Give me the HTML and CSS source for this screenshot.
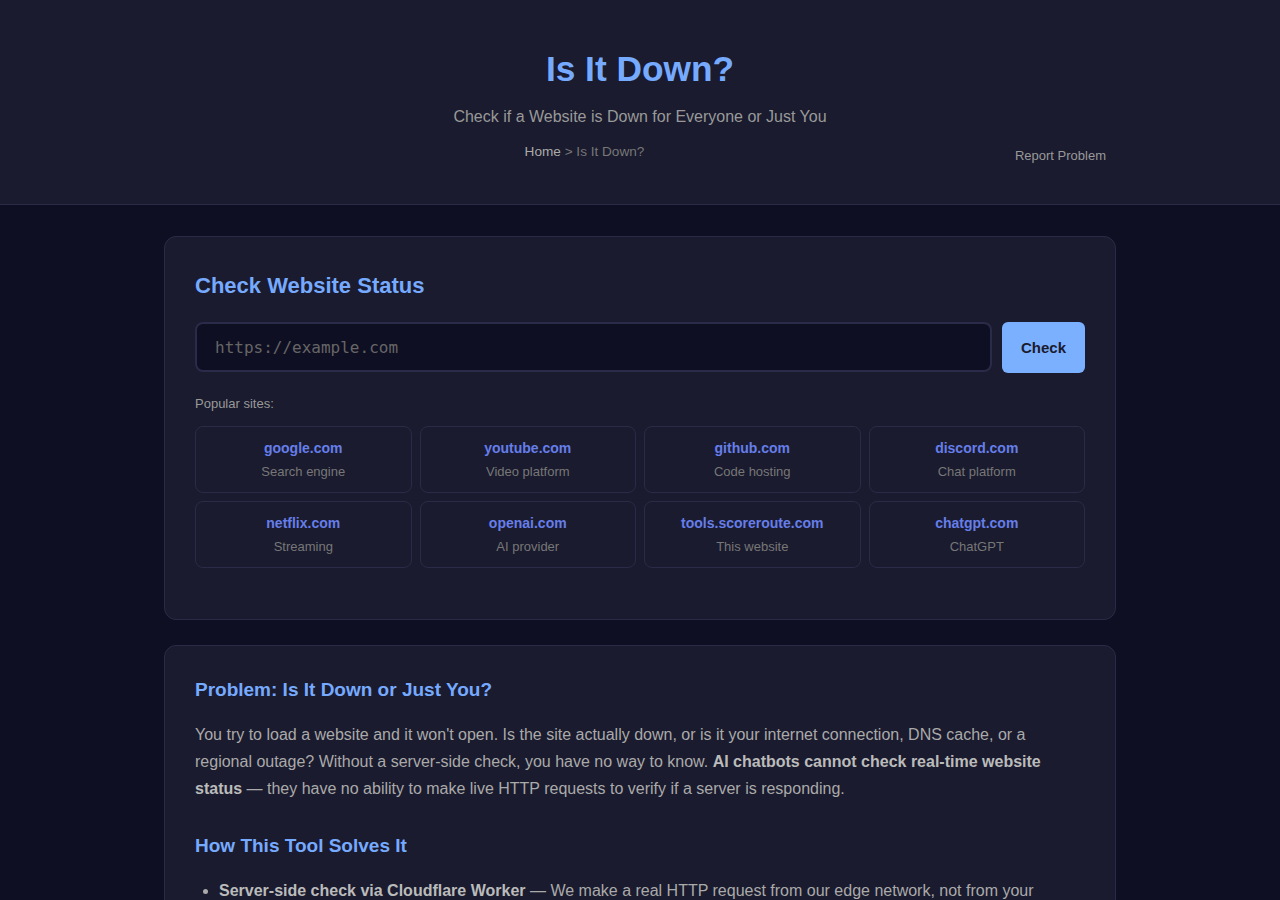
FILE: index.html
```html
<!DOCTYPE html>
<html>
<head>
    <title>Is It Down? - Check Website Status</title>
    <link rel="stylesheet" href="styles.css">
</head>
<body>
    <div class="header">
        <h1>Is It Down?</h1>
        <p class="subtitle">Check if a Website is Down for Everyone or Just You</p>
        <div class="header-row">
            <div class="breadcrumb"><a href="#">Home</a> &gt; Is It Down?</div>
            <a class="report" href="#">Report Problem</a>
        </div>
    </div>

    <div class="container">
        <div class="card">
            <h2 class="card-title">Check Website Status</h2>
            <div class="check-row">
                <input type="text" class="url-input" placeholder="https://example.com">
                <button class="check-button">Check</button>
            </div>
            <div class="popular-label">Popular sites:</div>
            <div class="sites">
                <div class="site"><div class="site-name">google.com</div><div class="site-desc">Search engine</div></div>
                <div class="site"><div class="site-name">youtube.com</div><div class="site-desc">Video platform</div></div>
                <div class="site"><div class="site-name">github.com</div><div class="site-desc">Code hosting</div></div>
                <div class="site"><div class="site-name">discord.com</div><div class="site-desc">Chat platform</div></div>
                <div class="site"><div class="site-name">netflix.com</div><div class="site-desc">Streaming</div></div>
                <div class="site"><div class="site-name">openai.com</div><div class="site-desc">AI provider</div></div>
                <div class="site"><div class="site-name">tools.scoreroute.com</div><div class="site-desc">This website</div></div>
                <div class="site"><div class="site-name">chatgpt.com</div><div class="site-desc">ChatGPT</div></div>
            </div>
        </div>

        <div class="card info">
            <h3>Problem: Is It Down or Just You?</h3>
            <p>You try to load a website and it won't open. Is the site actually down, or is it your internet connection, DNS cache, or a regional outage? Without a server-side check, you have no way to know. <strong>AI chatbots cannot check real-time website status</strong> &mdash; they have no ability to make live HTTP requests to verify if a server is responding.</p>

            <h3 class="second">How This Tool Solves It</h3>
            <ul>
                <li><strong>Server-side check via Cloudflare Worker</strong> &mdash; We make a real HTTP request from our edge network, not from your browser, so local network problems don't affect the result.</li>
                <li><strong>Response time and status code</strong> &mdash; See exactly how the server answered and how long it took.</li>
            </ul>
        </div>
    </div>
</body>
</html>
```

FILE: styles.css
```css
body {
    font-family: "Liberation Sans", Arial, sans-serif;
    margin: 0;
    background-color: #0f0f23;
    color: #aaa;
}

a {
    text-decoration: none;
}

.header {
    background-color: #1a1b2e;
    border-bottom: 1px solid #2a2b48;
    padding: 48px 0 37px;
    text-align: center;
}

.header h1 {
    margin: 0;
    font-size: 35.3px;
    line-height: 41px;
    color: #76aaff;
}

.subtitle {
    margin: 19px 0 0;
    font-size: 16px;
    line-height: 18px;
    color: #999;
}

.header-row {
    width: 952px;
    margin: 18px auto 0;
    display: flex;
    align-items: flex-start;
}

.breadcrumb {
    flex: 1;
    font-size: 13.6px;
    line-height: 16px;
    color: #777;
}

.breadcrumb a {
    color: #aaa;
}

.report {
    font-size: 13px;
    line-height: 15px;
    color: #999;
    padding: 4px 10px;
}

.container {
    width: 952px;
    margin: 31px auto 0;
}

.card {
    background-color: #1a1b2e;
    border: 1px solid #2a2b48;
    border-radius: 12px;
    padding: 30px 30px 10px;
    margin-bottom: 25px;
}

.card-title {
    margin: 6px 0 24px;
    font-size: 22px;
    line-height: 25px;
    color: #76aaff;
}

.check-row {
    display: flex;
    gap: 10px;
}

.url-input {
    flex: 1;
    height: 50px;
    box-sizing: border-box;
    background-color: #0f0f23;
    border: 2px solid #2a2b48;
    border-radius: 8px;
    padding: 0 18px;
    font-family: "DejaVu Sans Mono", monospace;
    font-size: 16px;
    color: #ddd;
}

.url-input::placeholder {
    color: #666;
}

.check-button {
    width: 83px;
    height: 51px;
    background-color: #7ab0ff;
    color: #1a1b2e;
    border: none;
    border-radius: 6px;
    font-family: "Liberation Sans", Arial, sans-serif;
    font-size: 15px;
    font-weight: bold;
    cursor: pointer;
}

.popular-label {
    margin: 23px 0 15px;
    font-size: 13px;
    line-height: 15px;
    color: #999;
}

.sites {
    display: grid;
    grid-template-columns: repeat(4, 1fr);
    gap: 8px;
    margin-bottom: 41px;
}

.site {
    border: 1px solid #2a2b48;
    border-radius: 8px;
    padding: 13px 10px 13px;
    text-align: center;
}

.site-name {
    font-size: 14px;
    line-height: 16px;
    font-weight: bold;
    color: #667eea;
    margin-bottom: 8px;
}

.site-desc {
    font-size: 13px;
    line-height: 15px;
    color: #777;
}

.info h3 {
    margin: 3px 0 20px;
    font-size: 19px;
    line-height: 22px;
    color: #76aaff;
}

.info h3.second {
    margin-top: 33px;
    margin-bottom: 20px;
}

.info p {
    margin: 0;
    font-size: 16px;
    line-height: 27px;
    color: #aaa;
}

.info strong {
    color: #bbb;
}

.info ul {
    margin: 0;
    padding-left: 24px;
    font-size: 16px;
    line-height: 27px;
}

.info li {
    margin-bottom: 8px;
}
```
